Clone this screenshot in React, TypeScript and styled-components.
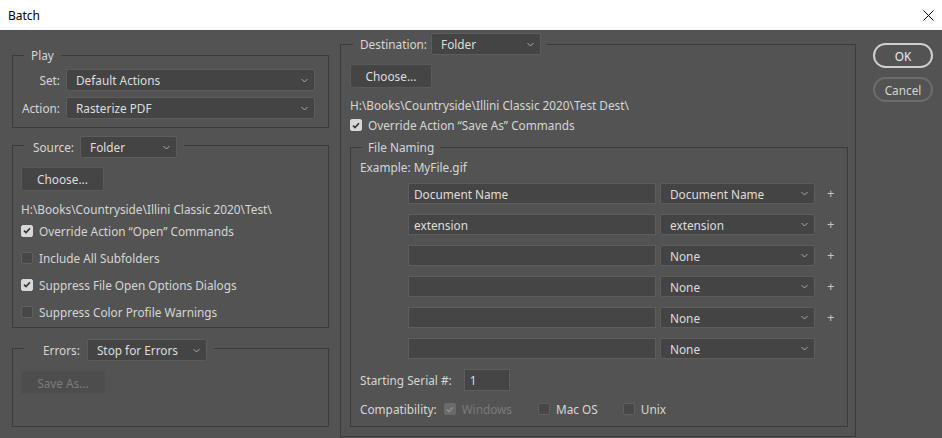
import React from 'react'
import styled, { createGlobalStyle } from 'styled-components'

const GlobalStyle = createGlobalStyle`
  * { box-sizing: border-box; }
  html, body { margin: 0; padding: 0; background: #ffffff; }
  body {
    font-family: "Noto Sans", "Open Sans", Arial, sans-serif;
    font-size: 11.8px;
    color: #d6d6d6;
  }
`

const Window = styled.div`
  width: 942px;
  height: 438px;
  display: flex;
  flex-direction: column;
`

const TitleBar = styled.div`
  height: 30px;
  flex: 0 0 30px;
  background: #ffffff;
  display: flex;
  align-items: center;
  justify-content: space-between;
  padding: 0 8px 0 8px;
  color: #000000;
  font-size: 12px;
`

const CloseButton = styled.div`
  width: 11px;
  height: 11px;
  display: flex;
  align-items: center;
  justify-content: center;
`

const Body = styled.div`
  flex: 1;
  background: #535353;
  display: flex;
  align-items: flex-start;
  padding-left: 12px;
`

const Column = styled.div<{ $width: number; $top: number; $left?: number }>`
  width: ${p => p.$width}px;
  margin-top: ${p => p.$top}px;
  margin-left: ${p => p.$left ?? 0}px;
  display: flex;
  flex-direction: column;
`

const Group = styled.fieldset<{ $pl: number; $pr: number; $pb: number; $mt?: number }>`
  margin: ${p => p.$mt ?? 0}px 0 0 0;
  min-width: 0;
  width: 100%;
  border: 1px solid #3b3b3b;
  padding: 0 ${p => p.$pr}px ${p => p.$pb}px ${p => p.$pl}px;
  display: flex;
  flex-direction: column;
  align-items: flex-start;
`

const Legend = styled.legend<{ $ml: number; $pl: number; $pr: number; $pt?: number }>`
  margin-left: ${p => p.$ml}px;
  padding: ${p => p.$pt ?? 0}px ${p => p.$pr}px 0 ${p => p.$pl}px;
  display: flex;
  align-items: center;
  line-height: 18px;
`

const LegendLabel = styled.span<{ $gap: number }>`
  margin-right: ${p => p.$gap}px;
  white-space: nowrap;
`

const FieldRow = styled.div<{ $mt?: number }>`
  display: flex;
  align-items: center;
  width: 100%;
  margin-top: ${p => p.$mt ?? 0}px;
`

const RowLabel = styled.span<{ $width: number }>`
  width: ${p => p.$width}px;
  text-align: right;
  margin-right: 6px;
  white-space: nowrap;
`

const SelectBox = styled.div<{ $width?: number; $height?: number }>`
  ${p => (p.$width ? `width: ${p.$width}px;` : 'flex: 1;')}
  height: ${p => p.$height ?? 22}px;
  background: #444444;
  border: 1px solid #5c5c5c;
  border-radius: 2px;
  display: flex;
  align-items: center;
  justify-content: space-between;
  padding: 0 6px 0 9px;
  color: #dedede;
  white-space: nowrap;
`

const Chevron = () => (
  <svg width="7" height="5" viewBox="0 0 7 5">
    <path d="M0.5 1 L3.5 4 L6.5 1" fill="none" stroke="#a9a9a9" strokeWidth="1" />
  </svg>
)

const Select: React.FC<{ value: string; width?: number; height?: number }> = ({ value, width, height }) => (
  <SelectBox $width={width} $height={height}>
    <span>{value}</span>
    <Chevron />
  </SelectBox>
)

const PushButton = styled.div<{ $width: number; $height: number; $mt: number; $disabled?: boolean }>`
  width: ${p => p.$width}px;
  height: ${p => p.$height}px;
  margin-top: ${p => p.$mt}px;
  background: ${p => (p.$disabled ? '#4d4d4d' : '#454545')};
  border: 1px solid ${p => (p.$disabled ? '#4f4f4f' : '#595959')};
  border-radius: 2px;
  display: flex;
  align-items: center;
  justify-content: center;
  color: ${p => (p.$disabled ? '#7c7c7c' : '#dedede')};
`

const PathText = styled.div<{ $mt: number }>`
  margin-top: ${p => p.$mt}px;
  line-height: 16px;
  white-space: nowrap;
`

const CheckRow = styled.div<{ $height: number; $mr?: number }>`
  height: ${p => p.$height}px;
  display: flex;
  align-items: center;
  margin-right: ${p => p.$mr ?? 0}px;
  white-space: nowrap;
`

const Box = styled.span<{ $checked: boolean; $disabled?: boolean }>`
  width: 12px;
  height: 12px;
  border-radius: 2px;
  margin-right: 6px;
  display: inline-flex;
  align-items: center;
  justify-content: center;
  background: ${p => (p.$disabled ? '#6a6a6a' : p.$checked ? '#d8d8d8' : '#474747')};
  border: 1px solid ${p => (p.$disabled ? '#6a6a6a' : p.$checked ? '#d8d8d8' : '#5f5f5f')};
`

const CheckText = styled.span<{ $disabled?: boolean }>`
  color: ${p => (p.$disabled ? '#7a7a7a' : '#d6d6d6')};
`

const Checkbox: React.FC<{ label: string; checked?: boolean; disabled?: boolean; height?: number; mr?: number }> = ({
  label,
  checked = false,
  disabled,
  height = 27,
  mr,
}) => (
  <CheckRow $height={height} $mr={mr}>
    <Box $checked={checked} $disabled={disabled}>
      {checked && (
        <svg width="8" height="7" viewBox="0 0 8 7">
          <path d="M1 3.6 L3 5.6 L7 1.2" fill="none" stroke={disabled ? '#8c8c8c' : '#333333'} strokeWidth="1.6" />
        </svg>
      )}
    </Box>
    <CheckText $disabled={disabled}>{label}</CheckText>
  </CheckRow>
)

const NamingRows = styled.div`
  margin-top: 8px;
  margin-left: 48px;
  display: flex;
  flex-direction: column;
  gap: 10px;
`

const NamingRow = styled.div`
  display: flex;
  align-items: center;
  gap: 4px;
  height: 21px;
`

const TextField = styled.div<{ $width: number; $height: number }>`
  width: ${p => p.$width}px;
  height: ${p => p.$height}px;
  background: #454545;
  border: 1px solid #5d5d5d;
  padding-left: 5px;
  display: flex;
  align-items: center;
  color: #dedede;
`

const Plus = styled.span`
  width: 9px;
  margin-left: 8px;
  color: #c4c4c4;
  font-size: 13px;
  line-height: 1;
`

const InlineLabel = styled.span<{ $gap: number }>`
  margin-right: ${p => p.$gap}px;
  white-space: nowrap;
`

const DialogButton = styled.div<{ $primary?: boolean }>`
  width: 60px;
  height: 25px;
  border-radius: 13px;
  border: 2px solid ${p => (p.$primary ? '#cfcfcf' : '#6c6c6c')};
  display: flex;
  align-items: center;
  justify-content: center;
  color: ${p => (p.$primary ? '#ececec' : '#d4d4d4')};
`

const ButtonColumn = styled.div`
  margin-top: 13px;
  margin-left: 17px;
  display: flex;
  flex-direction: column;
  gap: 9px;
`

const namingRows = [
  { text: 'Document Name', pick: 'Document Name', plus: true },
  { text: 'extension', pick: 'extension', plus: true },
  { text: '', pick: 'None', plus: true },
  { text: '', pick: 'None', plus: true },
  { text: '', pick: 'None', plus: true },
  { text: '', pick: 'None', plus: false },
]

export default function App() {
  return (
    <Window>
      <GlobalStyle />
      <TitleBar>
        <span>Batch</span>
        <CloseButton>
          <svg width="11" height="11" viewBox="0 0 11 11">
            <path d="M0.5 0.5 L10.5 10.5 M10.5 0.5 L0.5 10.5" stroke="#000" strokeWidth="1" />
          </svg>
        </CloseButton>
      </TitleBar>
      <Body>
        <Column $width={317} $top={16}>
          <Group $pl={7} $pr={13} $pb={8}>
            <Legend $ml={4} $pl={7} $pr={7}>Play</Legend>
            <FieldRow $mt={5}>
              <RowLabel $width={40}>Set:</RowLabel>
              <Select value="Default Actions" />
            </FieldRow>
            <FieldRow $mt={6}>
              <RowLabel $width={40}>Action:</RowLabel>
              <Select value="Rasterize PDF" />
            </FieldRow>
          </Group>

          <Group $pl={8} $pr={13} $pb={2} $mt={4}>
            <Legend $ml={3} $pl={9} $pr={7} $pt={4}>
              <LegendLabel $gap={6}>Source:</LegendLabel>
              <Select value="Folder" width={97} />
            </Legend>
            <PushButton $width={83} $height={24} $mt={9}>Choose...</PushButton>
            <PathText $mt={10}>H:\Books\Countryside\Illini Classic 2020\Test\</PathText>
            <Checkbox label="Override Action “Open” Commands" checked />
            <Checkbox label="Include All Subfolders" />
            <Checkbox label="Suppress File Open Options Dialogs" checked />
            <Checkbox label="Suppress Color Profile Warnings" />
          </Group>

          <Group $pl={8} $pr={13} $pb={32} $mt={7}>
            <Legend $ml={3} $pl={19} $pr={7} $pt={4}>
              <LegendLabel $gap={7}>Errors:</LegendLabel>
              <Select value="Stop for Errors" width={120} />
            </Legend>
            <PushButton $width={84} $height={23} $mt={10} $disabled>Save As...</PushButton>
          </Group>
        </Column>

        <Column $width={516} $top={3} $left={11}>
          <Group $pl={9} $pr={7} $pb={9}>
            <Legend $ml={3} $pl={7} $pr={6}>
              <LegendLabel $gap={4}>Destination:</LegendLabel>
              <Select value="Folder" width={110} />
            </Legend>
            <PushButton $width={82} $height={24} $mt={9}>Choose...</PushButton>
            <PathText $mt={9}>H:\Books\Countryside\Illini Classic 2020\Test Dest\</PathText>
            <Checkbox label="Override Action “Save As” Commands" checked height={24} />

            <Group $pl={9} $pr={9} $pb={6} $mt={1}>
              <Legend $ml={2} $pl={6} $pr={6}>File Naming</Legend>
              <PathText $mt={3}>Example: MyFile.gif</PathText>
              <NamingRows>
                {namingRows.map((row, i) => (
                  <NamingRow key={i}>
                    <TextField $width={248} $height={21}>{row.text}</TextField>
                    <Select value={row.pick} width={155} height={21} />
                    {row.plus && <Plus>+</Plus>}
                  </NamingRow>
                ))}
              </NamingRows>
              <FieldRow $mt={10}>
                <InlineLabel $gap={12}>Starting Serial #:</InlineLabel>
                <TextField $width={46} $height={22}>1</TextField>
              </FieldRow>
              <FieldRow $mt={7}>
                <InlineLabel $gap={7}>Compatibility:</InlineLabel>
                <Checkbox label="Windows" checked disabled height={22} mr={26} />
                <Checkbox label="Mac OS" height={22} mr={25} />
                <Checkbox label="Unix" height={22} />
              </FieldRow>
            </Group>
          </Group>
        </Column>

        <ButtonColumn>
          <DialogButton $primary>OK</DialogButton>
          <DialogButton>Cancel</DialogButton>
        </ButtonColumn>
      </Body>
    </Window>
  )
}
